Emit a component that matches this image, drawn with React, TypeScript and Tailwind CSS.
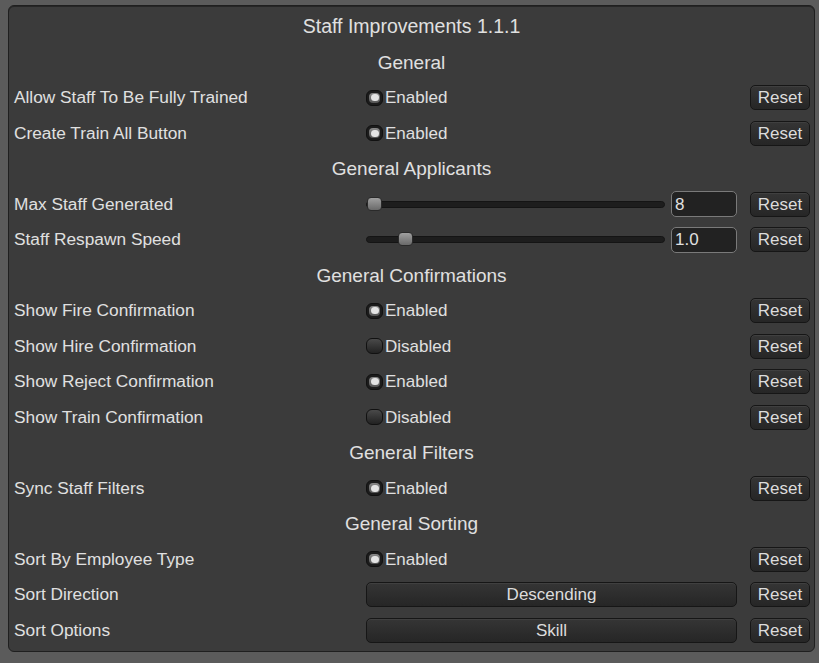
import React from "react";

const font = { fontFamily: '"Liberation Sans", Arial, sans-serif' };

function ResetBtn() {
  return (
    <div className="w-[60px] h-[25px] shrink-0 rounded-[5px] border border-[#161616] bg-gradient-to-b from-[#353535] to-[#262626] shadow-[inset_0_1px_0_rgba(255,255,255,0.06)] flex items-center justify-center text-[#dcdcdc]">
      Reset
    </div>
  );
}

function Toggle({ on }: { on: boolean }) {
  return (
    <div className="flex items-center">
      {on ? (
        <div className="w-[17px] h-[16px] rounded-[6px] bg-[#1c1c1c] border border-[#111] flex items-center justify-center">
          <div className="w-[11px] h-[10px] rounded-[4px] bg-gradient-to-b from-[#8a8a8a] to-[#555] flex items-center justify-center">
            <div className="w-[8px] h-[7px] rounded-full bg-[#e4e4e4]" />
          </div>
        </div>
      ) : (
        <div className="w-[17px] h-[16px] rounded-[6px] border border-[#111] bg-gradient-to-b from-[#4a4a4a] to-[#222]" />
      )}
      <span className="ml-[2px] text-[#e0e0e0]">{on ? "Enabled" : "Disabled"}</span>
    </div>
  );
}

function Slider({ pos, value }: { pos: number; value: string }) {
  return (
    <div className="flex items-center w-full">
      <div className="relative w-[299px] h-[7px] rounded-full bg-[#1d1d1d] border border-[#141414]">
        <div
          className="absolute top-[-5px] w-[15px] h-[14px] rounded-[4px] border border-[#2a2a2a] bg-gradient-to-b from-[#a0a0a0] to-[#6a6a6a]"
          style={{ left: pos }}
        />
      </div>
      <div className="ml-[6px] w-[66px] h-[26px] rounded-[5px] border border-[#7a7a7a] bg-[#222] flex items-center pl-[3px] text-[#e0e0e0]">
        {value}
      </div>
    </div>
  );
}

function BigBtn({ label }: { label: string }) {
  return (
    <div className="w-full h-[25px] rounded-[5px] border border-[#161616] bg-gradient-to-b from-[#353535] to-[#262626] shadow-[inset_0_1px_0_rgba(255,255,255,0.06)] flex items-center justify-center text-[#dcdcdc]">
      {label}
    </div>
  );
}

function Header({ text, title }: { text: string; title?: boolean }) {
  return (
    <div
      className={
        title
          ? "h-[35.5px] flex items-center justify-center text-[#e0e0e0] text-[19.5px]"
          : "h-[35.5px] flex items-center justify-center text-[#e0e0e0] text-[19px]"
      }
    >
      {text}
    </div>
  );
}

function Row({ label, children }: { label: string; children: React.ReactNode }) {
  return (
    <div className="h-[35.5px] flex items-center pl-[5px] pr-[3px]">
      <div className="w-[352px] shrink-0 text-[#e0e0e0] text-[17.3px]">{label}</div>
      <div className="w-[371px] shrink-0 flex items-center">{children}</div>
      <div className="ml-[13px]">
        <ResetBtn />
      </div>
    </div>
  );
}

export default function App() {
  return (
    <div className="w-[819px] h-[663px] bg-[#5b5b5b] pt-[5px] pl-[8px] overflow-hidden text-[17px] leading-none" style={font}>
      <div className="w-[807px] h-[647px] rounded-[6px] border border-[#1f1f1f] bg-[#3b3b3b] pt-[3px] shadow-[inset_0_1px_0_#262626]">
        <Header title text="Staff Improvements 1.1.1" />
        <Header text="General" />
        <Row label="Allow Staff To Be Fully Trained"><Toggle on /></Row>
        <Row label="Create Train All Button"><Toggle on /></Row>
        <Header text="General Applicants" />
        <Row label="Max Staff Generated"><Slider pos={0} value="8" /></Row>
        <Row label="Staff Respawn Speed"><Slider pos={31} value="1.0" /></Row>
        <Header text="General Confirmations" />
        <Row label="Show Fire Confirmation"><Toggle on /></Row>
        <Row label="Show Hire Confirmation"><Toggle on={false} /></Row>
        <Row label="Show Reject Confirmation"><Toggle on /></Row>
        <Row label="Show Train Confirmation"><Toggle on={false} /></Row>
        <Header text="General Filters" />
        <Row label="Sync Staff Filters"><Toggle on /></Row>
        <Header text="General Sorting" />
        <Row label="Sort By Employee Type"><Toggle on /></Row>
        <Row label="Sort Direction"><BigBtn label="Descending" /></Row>
        <Row label="Sort Options"><BigBtn label="Skill" /></Row>
      </div>
    </div>
  );
}
